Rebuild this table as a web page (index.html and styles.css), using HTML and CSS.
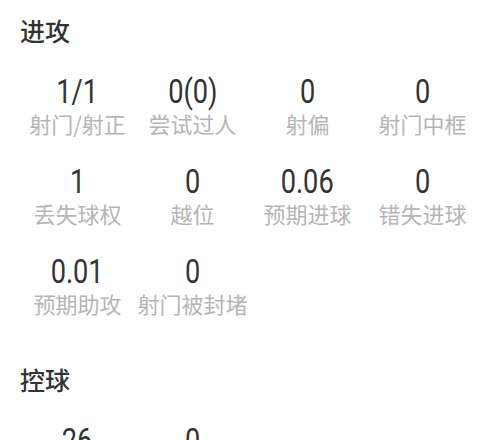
FILE: index.html
```html
<!DOCTYPE html>
<html lang="zh-CN">
<head>
<meta charset="utf-8">
<title>统计</title>
<link rel="stylesheet" href="styles.css">
</head>
<body>
<div class="page">
  <section class="section">
    <h2 class="section-title">进攻</h2>
    <div class="stats">
      <div class="stat"><div class="value">1/1</div><div class="label">射门/射正</div></div>
      <div class="stat"><div class="value">0(0)</div><div class="label">尝试过人</div></div>
      <div class="stat"><div class="value">0</div><div class="label">射偏</div></div>
      <div class="stat"><div class="value">0</div><div class="label">射门中框</div></div>
      <div class="stat"><div class="value">1</div><div class="label">丢失球权</div></div>
      <div class="stat"><div class="value">0</div><div class="label">越位</div></div>
      <div class="stat"><div class="value">0.06</div><div class="label">预期进球</div></div>
      <div class="stat"><div class="value">0</div><div class="label">错失进球</div></div>
      <div class="stat"><div class="value">0.01</div><div class="label">预期助攻</div></div>
      <div class="stat"><div class="value">0</div><div class="label">射门被封堵</div></div>
    </div>
  </section>
  <section class="section">
    <h2 class="section-title">控球</h2>
    <div class="stats">
      <div class="stat"><div class="value">26</div><div class="label">触球</div></div>
      <div class="stat"><div class="value">0</div><div class="label">关键传球</div></div>
    </div>
  </section>
</div>
</body>
</html>
```

FILE: styles.css
```css
html, body {
  margin: 0;
  padding: 0;
  background: #ffffff;
  overflow: hidden;
}

.page {
  padding: 12px 20px 0 20px;
  font-family: "Noto Sans CJK SC", "Noto Sans", sans-serif;
}

.section + .section {
  margin-top: 43px;
}

.section-title {
  margin: 0 0 26px 0;
  font-size: 25px;
  line-height: 36px;
  font-weight: 500;
  color: #333333;
}

.stats {
  display: grid;
  grid-template-columns: repeat(4, 115px);
  row-gap: 26px;
}

.stat {
  display: flex;
  flex-direction: column;
  align-items: center;
}

.value {
  font-family: Roboto, "Liberation Sans", sans-serif;
  font-size: 34px;
  line-height: 34px;
  color: #333333;
  transform: scaleX(0.8);
}

.label {
  font-size: 22px;
  line-height: 30px;
  color: #b5b5b5;
  white-space: nowrap;
}
```
